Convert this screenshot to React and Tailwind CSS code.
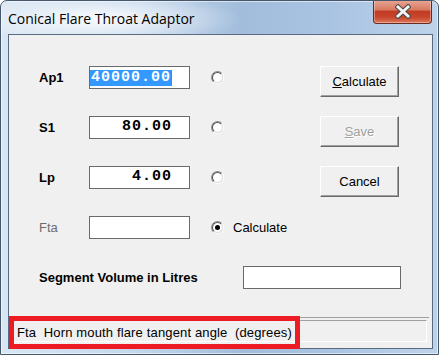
function Radio({ checked }) {
  return (
    <div className="w-[13px] h-[13px] rounded-full border border-t-[#8a8a8a] border-l-[#8a8a8a] border-r-white border-b-white">
      <div className="w-full h-full rounded-full border border-t-[#505050] border-l-[#505050] border-r-[#dcdcdc] border-b-[#dcdcdc] bg-white flex items-center justify-center">
        {checked && <div className="w-[5px] h-[5px] rounded-full bg-black" />}
      </div>
    </div>
  );
}

function Btn({ children, disabled }) {
  return (
    <div
      className={
        "ml-[96px] w-[79px] h-[31px] border border-t-white border-l-white border-r-[#696969] border-b-[#696969] shadow-[inset_-1px_-1px_0_#a0a0a0] bg-[#f0f0f0] flex items-center justify-center text-[13px] " +
        (disabled ? "text-[#a0a0a0] [text-shadow:1px_1px_0_#ffffff]" : "text-black")
      }
    >
      {children}
    </div>
  );
}

function Input({ children, w = "w-[101px]" }) {
  return (
    <div
      className={
        w +
        " h-[23px] border border-[#6a6a6a] bg-white flex items-center justify-end pr-[17px] font-['Liberation_Mono',monospace] font-bold text-[15px] tracking-[1px] text-black"
      }
    >
      {children}
    </div>
  );
}

function Label({ children, grey, w = "w-[50px]" }) {
  return (
    <div
      className={
        w +
        " h-[23px] flex items-center text-[13px] " +
        (grey ? "text-[#6d6d6d]" : "font-bold text-black")
      }
    >
      {children}
    </div>
  );
}

export default function App() {
  return (
    <div className="relative w-[439px] h-[355px] overflow-hidden rounded-t-[7px] border border-[#46566b] bg-[linear-gradient(90deg,#d9e6f3_0%,#c4d7ec_30%,#a2bddc_55%,#a9c3e2_75%,#bed3ea_100%)] shadow-[inset_0_0_0_1px_rgba(255,255,255,0.55)] flex flex-col font-['Liberation_Sans',Arial,sans-serif]">
      <div className="h-[33px] shrink-0 flex items-start justify-between bg-[radial-gradient(ellipse_140px_26px_at_100px_18px,rgba(255,255,255,0.9),rgba(255,255,255,0))]">
        <div className="pl-[7px] pt-[8px] text-[14px] leading-[20px] text-black font-['Open_Sans',sans-serif]">
          Conical Flare Throat Adaptor
        </div>
        <div className="-mt-px mr-[6px] w-[59px] h-[24px] rounded-b-[4px] border border-[#6b2a20] border-t-0 bg-[linear-gradient(180deg,#e8a898_0%,#d87a62_42%,#c23b24_50%,#c8452b_75%,#dc7a5c_100%)] shadow-[inset_0_0_0_1px_rgba(255,255,255,0.35)] flex items-center justify-center">
          <svg width="16" height="15" viewBox="0 0 16 15">
            <path d="M3 3 L13 12 M13 3 L3 12" stroke="#4a4a4a" strokeWidth="5" strokeLinecap="square" />
            <path d="M3 3 L13 12 M13 3 L3 12" stroke="#f4f4f4" strokeWidth="3" strokeLinecap="square" />
          </svg>
        </div>
      </div>

      <div className="ml-[7px] mr-[5px] mb-[5px] flex-1 border border-[#5a6b80] bg-[#f0f0f0] flex flex-col">
        <div className="pt-[31px] pl-[30px] flex flex-col">
          <div className="h-[50px] flex items-start">
            <Label>Ap1</Label>
            <Input>
              <span className="bg-[#3399ff] text-white leading-[16px] pl-[1px]">40000.00</span>
              <span className="w-[1px] h-[16px] bg-[#e06010]" />
            </Input>
            <div className="ml-[21px] h-[23px] flex items-center">
              <Radio />
            </div>
            <Btn>
              <span>
                <span className="underline">C</span>alculate
              </span>
            </Btn>
          </div>
          <div className="h-[50px] flex items-start">
            <Label>S1</Label>
            <Input>80.00</Input>
            <div className="ml-[21px] h-[23px] flex items-center">
              <Radio />
            </div>
            <Btn disabled>
              <span>
                <span className="underline">S</span>ave
              </span>
            </Btn>
          </div>
          <div className="h-[50px] flex items-start">
            <Label>Lp</Label>
            <Input>4.00</Input>
            <div className="ml-[21px] h-[23px] flex items-center">
              <Radio />
            </div>
            <Btn>Cancel</Btn>
          </div>
          <div className="h-[50px] flex items-start">
            <Label grey>Fta</Label>
            <Input></Input>
            <div className="ml-[21px] h-[23px] flex items-center">
              <Radio checked />
            </div>
            <div className="ml-[9px] h-[23px] flex items-center text-[13px] text-black">Calculate</div>
          </div>
          <div className="h-[50px] flex items-start">
            <Label w="w-[204px]">Segment Volume in Litres</Label>
            <Input w="w-[158px]"></Input>
          </div>
        </div>
        <div className="mt-[1px] mr-[3px] border-t border-[#a0a0a0] pt-[2px]">
          <div className="ml-[3px] mr-[2px] h-[22px] border border-t-[#a0a0a0] border-l-[#a0a0a0] border-r-white border-b-white flex items-center pl-[4px] pt-[4px] text-[13px] tracking-[0.15px] text-black whitespace-pre">
            {"Fta  Horn mouth flare tangent angle  (degrees)"}
          </div>
        </div>
      </div>

      <div className="absolute left-[8px] top-[315px] w-[291px] h-[33px] border-[5px] border-[#ed1c24]" />
    </div>
  );
}
